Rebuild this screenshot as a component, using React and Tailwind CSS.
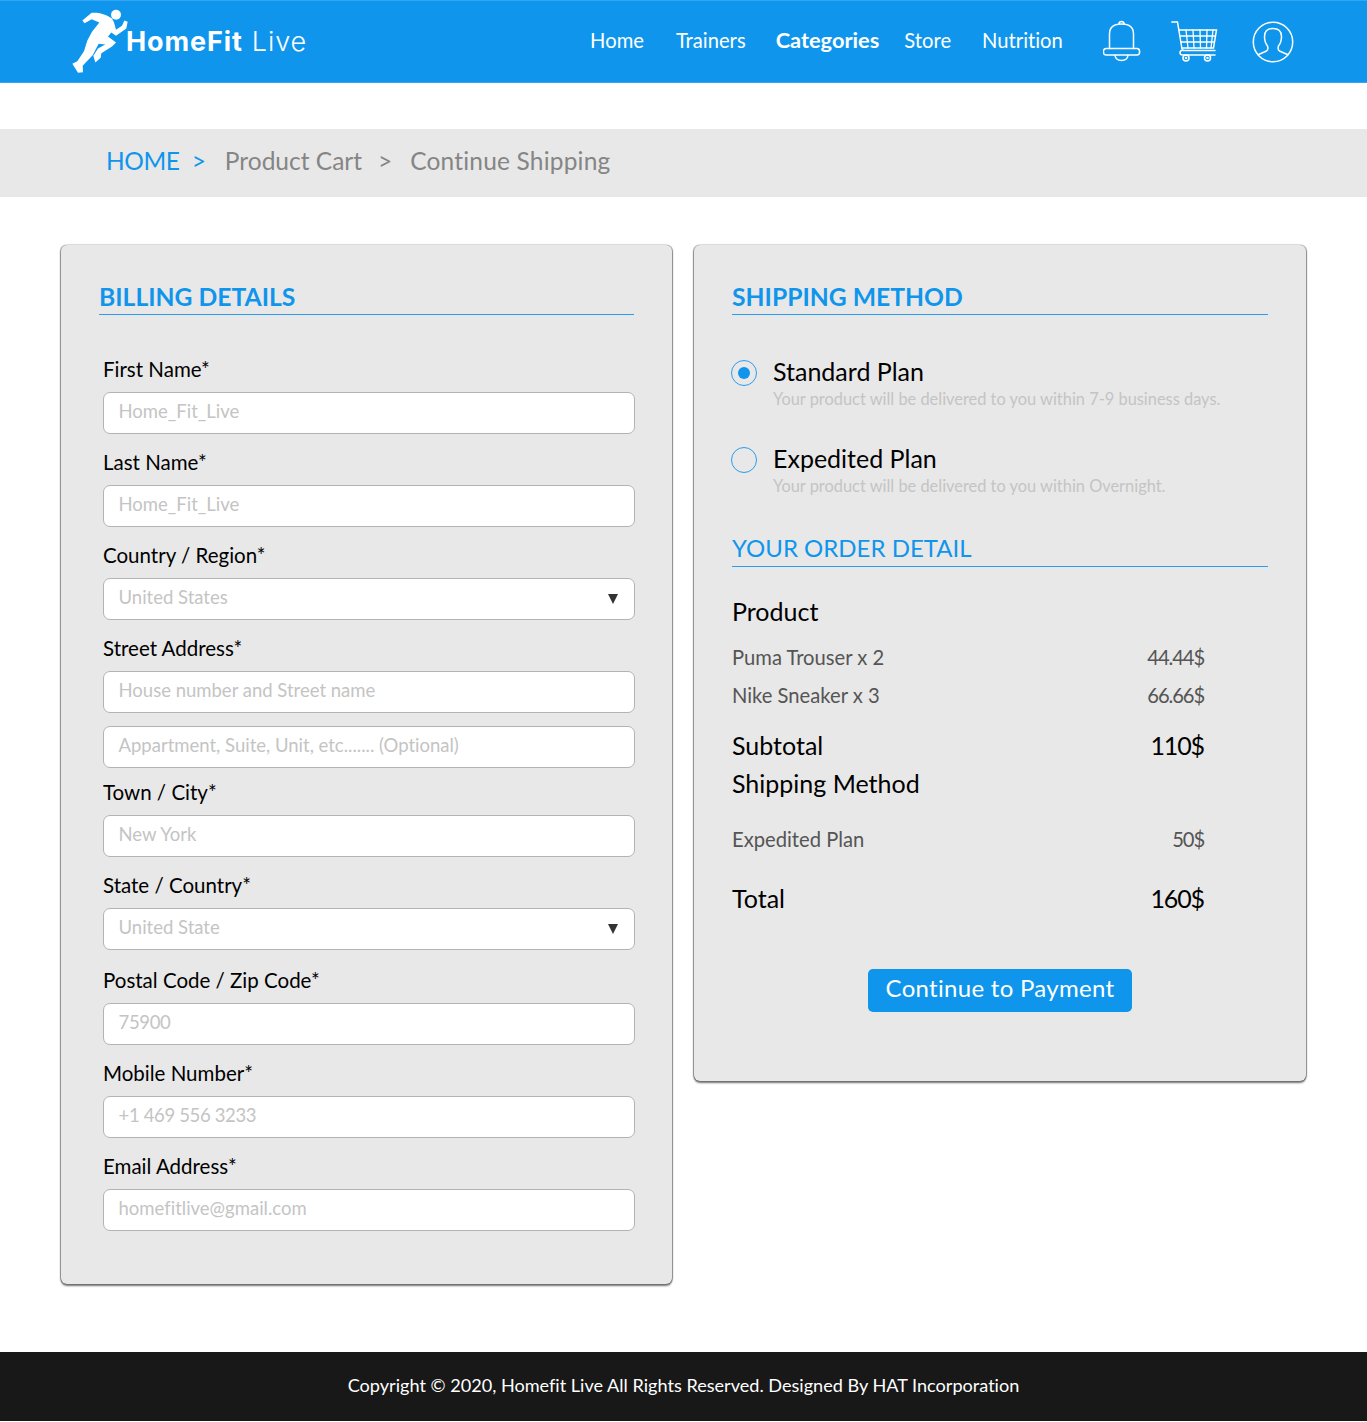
import React from "react";

const font = { fontFamily: '"Lato", "Noto Sans", sans-serif' };

function Runner() {
  return (
    <svg viewBox="60 25 180 200" className="w-[60px] h-[67px] shrink-0" fill="#fff">
      <circle cx="198" cy="45" r="15" />
      <path d="M97 62 L125 39 C142 37 168 42 186 56 L192 68 L198 90 L216 78 L223 62 L233 66 L229 86 L198 108 L184 98 L174 110 L198 128 L186 140 L154 160 L152 174 L136 188 L130 168 L144 146 L166 134 L146 132 L128 166 L98 198 L99 217 L84 219 L67 192 L82 184 L102 154 L112 122 L126 96 L148 68 L125 58 L104 70 Z" />
    </svg>
  );
}

function Bell() {
  return (
    <svg viewBox="0 0 38 44" className="w-[38px] h-[44px]" fill="none" stroke="#fff" strokeWidth="1.5" strokeLinecap="round">
      <path d="M6.500 28.500 V14 C6.500 7 11 4 18.500 4 C26 4 30.500 7 30.500 14 V28.500" />
      <path d="M16 4 C16 0.800 21 0.800 21 4" />
      <path d="M3 28.500 H34 C37.500 28.500 37.500 35 34 35 H3 C-0.500 35 -0.500 28.500 3 28.500" />
      <path d="M12 35.500 C13 42 24 42 25 35.500" />
    </svg>
  );
}

function Cart() {
  return (
    <svg viewBox="0 0 48 44" className="w-[48px] h-[44px]" fill="none" stroke="#fff" strokeWidth="1.300" strokeLinecap="round">
      <path d="M0.800 2 H6.500 L11 29" strokeWidth="1.500" />
      <path d="M8 10 H45.500 L42.500 28 H11" strokeWidth="1.500" />
      <path d="M9 16 H44.500 M10 22 H43.500" />
      <path d="M15 10 L17 28 M22 10 L23 28 M29 10 L29.500 28 M36 10 L35.500 28 M42 10 L40 28" />
      <path d="M12 30 C8 30.500 8 35 12 35 H44" strokeWidth="1.500" />
      <path d="M12 30.500 H44" strokeWidth="1.500" />
      <circle cx="15" cy="38" r="3" strokeWidth="1.500" />
      <circle cx="36.500" cy="38" r="3" strokeWidth="1.500" />
      <circle cx="15" cy="38" r="0.600" />
      <circle cx="36.500" cy="38" r="0.600" />
    </svg>
  );
}

function UserIcon() {
  return (
    <svg viewBox="0 0 42 42" className="w-[42px] h-[42px]" fill="none" stroke="#fff" strokeWidth="1.500" strokeLinejoin="round">
      <circle cx="21" cy="21" r="19.700" />
      <path d="M5.500 34 L14.500 30 C16 29 16 26.500 15.500 25 C13.500 22.500 12.500 19 12.500 15.500 C12.500 10 16 7.500 21 7.500 C26 7.500 29.500 10 29.500 15.500 C29.500 19 28.500 22.500 26.500 25 C26 26.500 26 29 27.500 30 L36.500 34" />
    </svg>
  );
}

function Label({ children, cls = "mt-[16px]" }) {
  return <div className={`h-6 leading-6 text-[20.500px] text-black ${cls}`}>{children}</div>;
}

function Field({ placeholder, select, tight, cls = "mt-[11px]" }) {
  return (
    <div className={`relative h-[42px] w-[532px] rounded-[7px] border border-[#b3b3b3] bg-white flex items-center pl-[14.500px] pb-[2px] text-[18.500px] text-[#c4c4c4] ${cls}`}>
      <span className={tight ? "tracking-[-0.350px]" : ""}>{placeholder}</span>
      {select && (
        <span className="absolute right-[16px] top-[15px] w-0 h-0 border-x-[5px] border-x-transparent border-t-[10px] border-t-[#333]" />
      )}
    </div>
  );
}

function Row({ left, right, cls, big }) {
  return (
    <div className={`flex justify-between w-[472px] h-7 leading-7 ${big ? "text-[25px] text-black" : "text-[20.200px] text-[#555]"} ${cls}`}>
      <span>{left}</span>
      <span className="tracking-[-1.100px]">{right}</span>
    </div>
  );
}

function Radio({ checked, title, desc, cls }) {
  return (
    <div className={`flex -ml-px ${cls}`}>
      <span className="mt-[4px] w-[26px] h-[26px] rounded-full border border-[#2a9df0] flex items-center justify-center shrink-0">
        {checked && <span className="w-[12px] h-[12px] rounded-full bg-[#0f96ec]" />}
      </span>
      <div className="ml-4">
        <div className="h-[30px] leading-[30px] text-[25px] text-black">{title}</div>
        <div className="h-6 leading-6 mt-[1px] text-[16.400px] text-[#c4c4c4] whitespace-nowrap">{desc}</div>
      </div>
    </div>
  );
}

const card = "rounded-[6px] bg-[#e8e8e8] shadow-[0_2px_2px_rgba(0,0,0,0.55),-1px_0_1px_rgba(0,0,0,0.35),1px_0_1px_rgba(0,0,0,0.35),0_-1px_1px_rgba(0,0,0,0.08)]";

export default function App() {
  return (
    <div style={font} className="w-[1367px] h-[1422px] bg-white flex flex-col [font-variant-ligatures:none]">
      <header className="h-[83px] bg-[#0f96ec] border-y border-[#2ea6f2] flex items-center shrink-0 text-white">
        <div className="ml-[70px] flex items-center">
          <Runner />
          <div className="-ml-[4px] mt-[1px] text-[27px] tracking-[0.9px] whitespace-nowrap" style={{ fontFamily: '"Inter", sans-serif' }}>
            <span className="font-bold">HomeFit</span>
            <span className="font-light ml-[9px]">Live</span>
          </div>
        </div>
        <nav className="ml-[283px] flex items-center text-[20.200px] whitespace-nowrap -mt-[2px]">
          <span>Home</span>
          <span className="ml-[32px]">Trainers</span>
          <span className="ml-[30px] font-bold text-[21.800px]">Categories</span>
          <span className="ml-[25px]">Store</span>
          <span className="ml-[31px]">Nutrition</span>
        </nav>
        <div className="ml-[40px] flex items-center">
          <Bell />
          <span className="ml-[30px]"><Cart /></span>
          <span className="ml-[33px]"><UserIcon /></span>
        </div>
      </header>

      <div className="mt-[46px] h-[68px] bg-[#e8e8e8] flex items-center pl-[106px] pb-[3px] text-[24.500px] text-[#858585] shrink-0">
        <span className="text-[#0f96ec] tracking-[-0.400px]">HOME</span>
        <span className="text-[#0f96ec] ml-[12px]">&gt;</span>
        <span className="ml-[19px]">Product Cart</span>
        <span className="ml-[16px]">&gt;</span>
        <span className="ml-[18px] tracking-[0.180px]">Continue Shipping</span>
      </div>

      <main className="mt-[48px] ml-[61px] flex items-start gap-[22px] flex-1">
        <section className={`${card} w-[611px] h-[1039px] pt-[36px] pl-[38px] pr-[38px]`}>
          <h2 className="h-[33px] leading-[31px] text-[24.700px] font-bold text-[#0f96ec] border-b border-[#2a9df0] box-content -mb-[2px]">BILLING DETAILS</h2>
          <div className="pl-[4px]">
            <Label cls="mt-[44px]">First Name*</Label>
            <Field placeholder="Home_Fit_Live" />
            <Label>Last Name*</Label>
            <Field placeholder="Home_Fit_Live" />
            <Label>Country / Region*</Label>
            <Field placeholder="United States" select />
            <Label>Street Address*</Label>
            <Field placeholder="House number and Street name" />
            <Field placeholder="Appartment, Suite, Unit, etc....... (Optional)" cls="mt-[13px]" />
            <Label cls="mt-[12px]">Town / City*</Label>
            <Field placeholder="New York" />
            <Label>State / Country*</Label>
            <Field placeholder="United State" select />
            <Label cls="mt-[18px]">Postal Code / Zip Code*</Label>
            <Field placeholder="75900" tight />
            <Label>Mobile Number*</Label>
            <Field placeholder="+1 469 556 3233" tight />
            <Label>Email Address*</Label>
            <Field placeholder="homefitlive@gmail.com" />
          </div>
        </section>

        <section className={`${card} w-[612px] h-[836px] pt-[36px] pl-[38px] pr-[38px]`}>
          <h2 className="h-[33px] leading-[31px] text-[24.700px] font-bold text-[#0f96ec] border-b border-[#2a9df0] box-content -mb-[2px]">SHIPPING METHOD</h2>
          <Radio cls="mt-[43px]" checked title="Standard Plan" desc="Your product will be delivered to you within 7-9 business days." />
          <Radio cls="mt-[32px]" title="Expedited Plan" desc="Your product will be delivered to you within Overnight." />
          <h2 className="mt-[35px] h-[33px] leading-[30px] text-[24px] text-[#0f96ec] border-b border-[#2a9df0] box-content">YOUR ORDER DETAIL</h2>
          <div className="mt-[29px] h-[30px] leading-[30px] text-[25px] text-black">Product</div>
          <Row cls="mt-[17px]" left="Puma Trouser x 2" right="44.44$" />
          <Row cls="mt-[10px]" left="Nike Sneaker x 3" right="66.66$" />
          <Row cls="mt-[22px]" big left="Subtotal" right="110$" />
          <Row cls="mt-[10px]" big left="Shipping Method" />
          <Row cls="mt-[28px]" left="Expedited Plan" right="50$" />
          <Row cls="mt-[31px]" big left="Total" right="160$" />
          <div className="mt-[57px] flex justify-center w-[536px]">
            <button className="w-[264px] h-[43px] rounded-[5px] bg-[#0f96ec] text-white text-[24px] tracking-[0.3px] pb-[5px]">Continue to Payment</button>
          </div>
        </section>
      </main>

      <footer className="h-[69px] mb-px pb-[2px] bg-[#181818] flex items-center justify-center text-[18.100px] text-white shrink-0">
        Copyright © 2020, Homefit Live All Rights Reserved. Designed By HAT Incorporation
      </footer>
    </div>
  );
}
